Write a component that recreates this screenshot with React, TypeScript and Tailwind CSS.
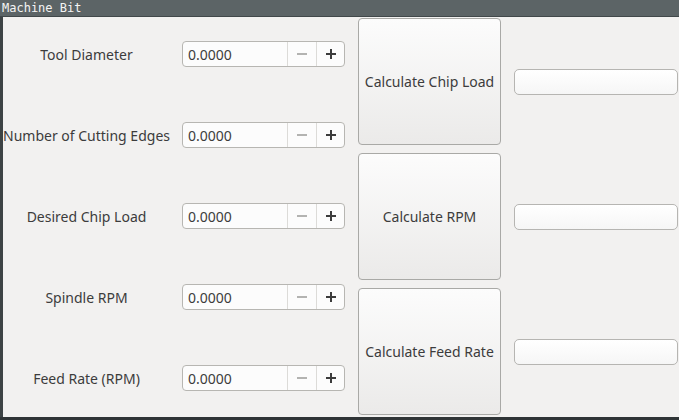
import React from "react";

const labels = [
  "Tool Diameter",
  "Number of Cutting Edges",
  "Desired Chip Load",
  "Spindle RPM",
  "Feed Rate (RPM)",
];

const buttons = ["Calculate Chip Load", "Calculate RPM", "Calculate Feed Rate"];

function SpinBox() {
  return (
    <div className="flex h-[26px] w-[163px] rounded-[4px] border border-[#b7b6b2] bg-[#fcfcfc]">
      <div className="flex flex-1 items-center pl-[5px] text-[14px] text-[#3c3c3c]">0.0000</div>
      <div className="flex w-[29px] items-center justify-center border-l border-[#dcdbd8]">
        <svg width="10" height="10" viewBox="0 0 10 10">
          <rect x="0" y="4" width="10" height="2" fill="#b3b3b1" />
        </svg>
      </div>
      <div className="flex w-[28px] items-center justify-center border-l border-[#dcdbd8]">
        <svg width="10" height="10" viewBox="0 0 10 10">
          <rect x="0" y="4" width="10" height="2" fill="#3c3c3c" />
          <rect x="4" y="0" width="2" height="10" fill="#3c3c3c" />
        </svg>
      </div>
    </div>
  );
}

export default function App() {
  return (
    <div
      className="flex h-[420px] w-[679px] flex-col overflow-hidden bg-[#f2f1f0]"
      style={{ fontFamily: '"Noto Sans", "Open Sans", sans-serif' }}
    >
      <div
        className="flex h-[17px] items-center border-b border-[#41484a] bg-[#5c6466] pl-[2px] text-[12px] text-[#f4f4f4]"
        style={{ fontFamily: '"DejaVu Sans Mono", monospace' }}
      >
        Machine Bit
      </div>
      <div className="flex flex-1 border-l-[3px] border-[#3d4345]">
        <div className="flex w-[355px] flex-col gap-[55px] pt-[24px]">
          {labels.map((l) => (
            <div key={l} className="flex h-[26px] items-center">
              <div className="w-[167px] text-center text-[14px] text-[#3c3c3c]">{l}</div>
              <div className="ml-[12px]">
                <SpinBox />
              </div>
            </div>
          ))}
        </div>
        <div className="flex flex-col gap-[8px] pt-[1px]">
          {buttons.map((b) => (
            <div key={b} className="flex items-center">
              <div className="flex h-[127px] w-[143px] items-center justify-center rounded-[4px] border border-[#a9a9a6] bg-gradient-to-b from-[#fcfcfc] to-[#ebeae9] text-[14px] text-[#3c3c3c]">
                {b}
              </div>
              <div className="ml-[13px] h-[26px] w-[164px] rounded-[5px] border border-[#b6b5b2] bg-gradient-to-b from-[#ffffff] to-[#f6f6f6]" />
            </div>
          ))}
        </div>
      </div>
      <div className="h-[3px] bg-[#2f3436]" />
    </div>
  );
}
